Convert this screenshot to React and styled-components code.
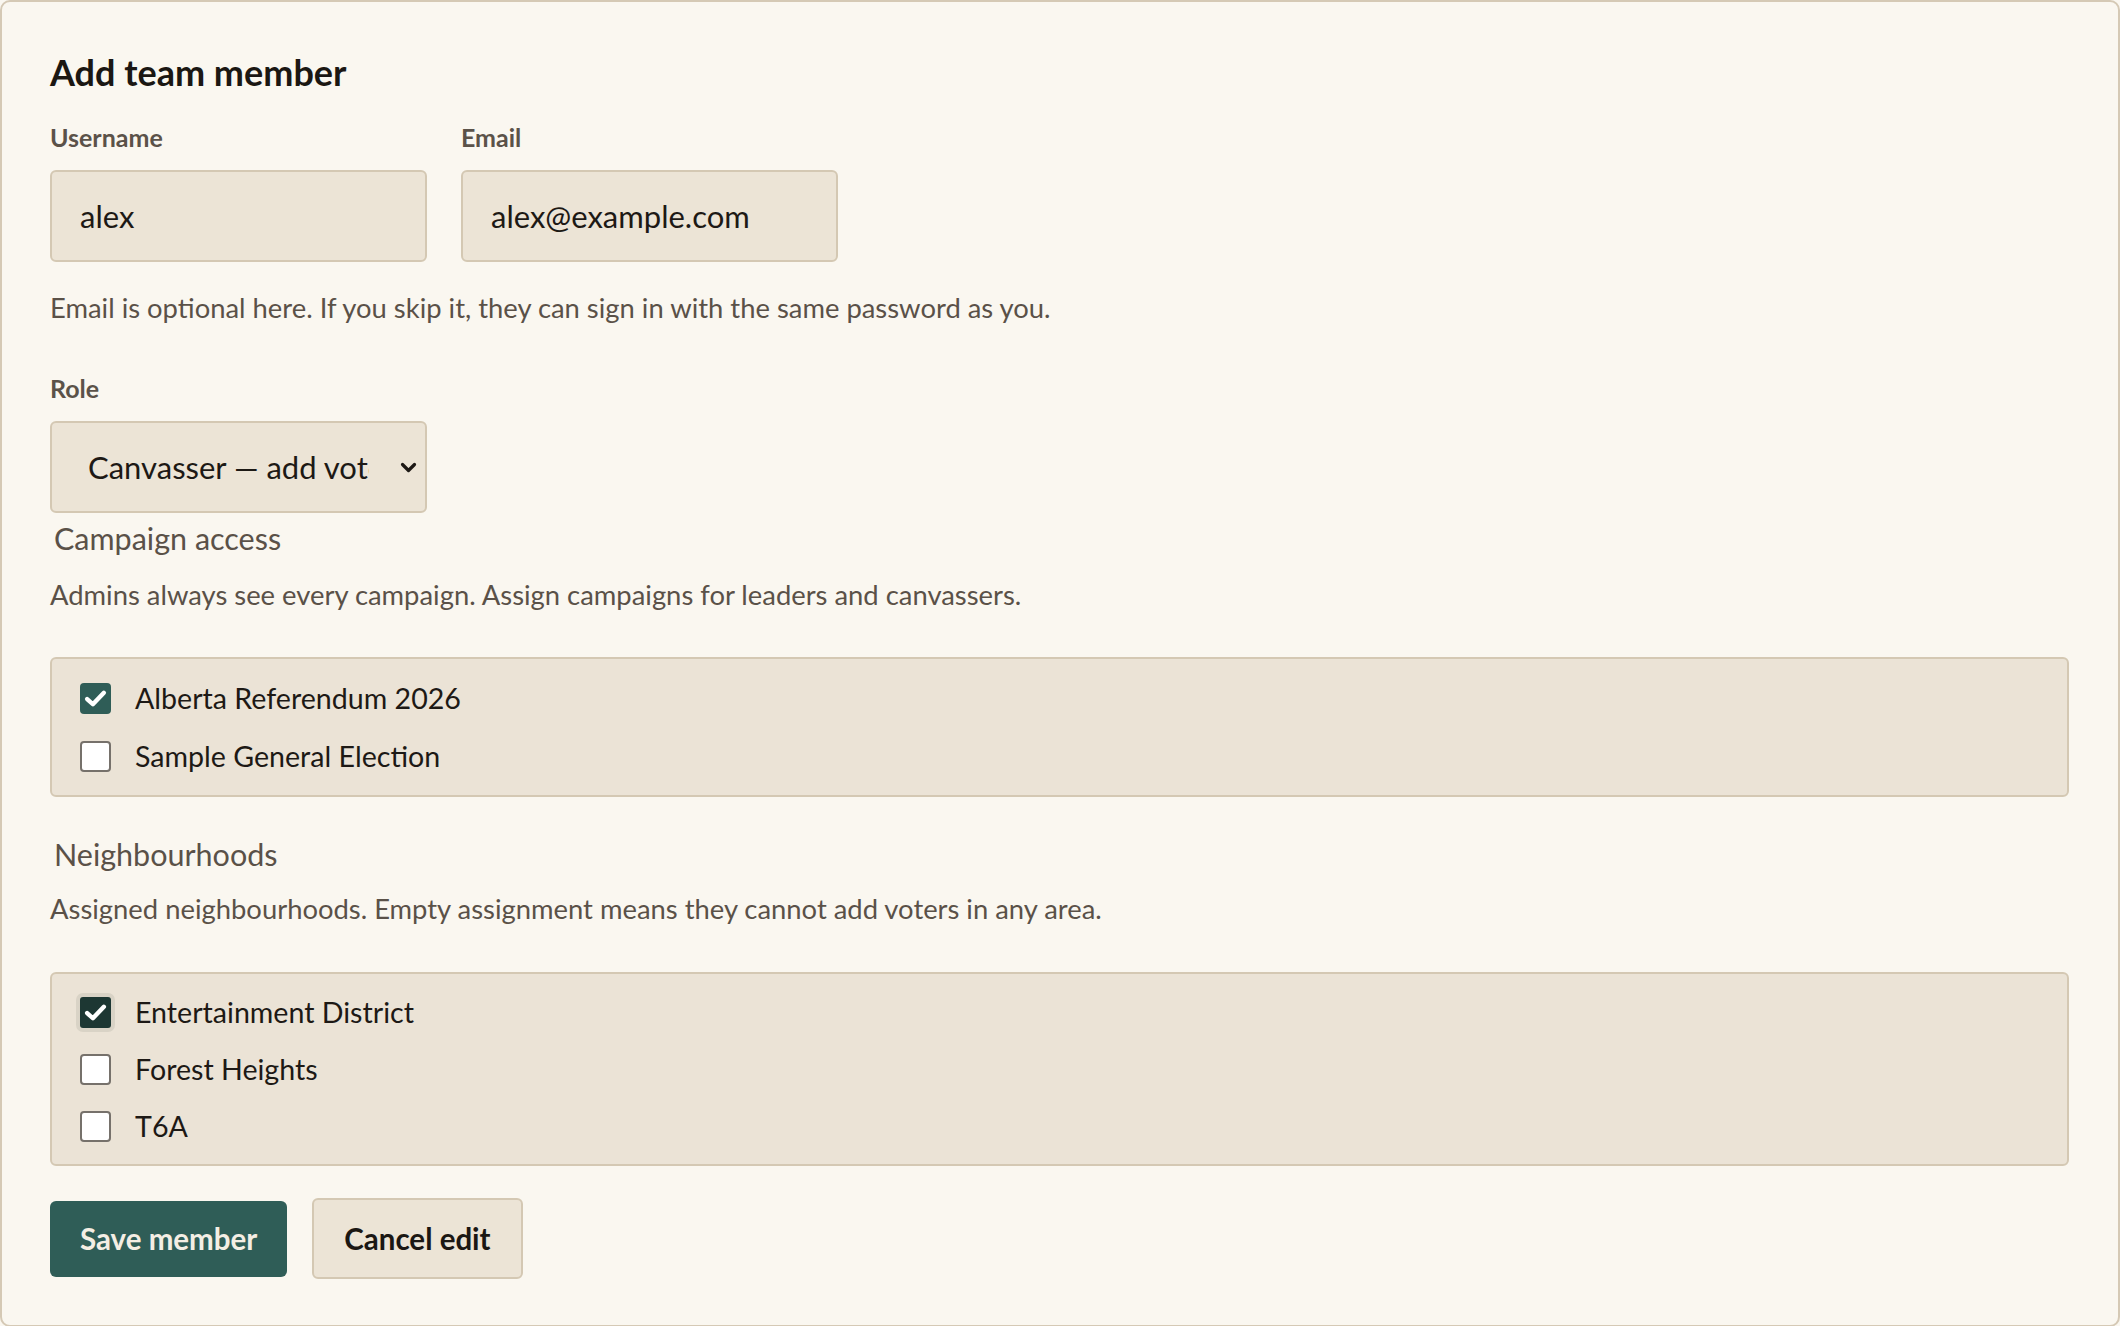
import React, { useState } from "react";
import styled, { createGlobalStyle } from "styled-components";

const GlobalStyle = createGlobalStyle`
  html, body {
    margin: 0;
    padding: 0;
    background: #faf7f0;
  }
  body {
    font-family: Lato, "Liberation Sans", sans-serif;
    color: #1d1915;
  }
  * {
    box-sizing: border-box;
  }
`;

const Card = styled.form`
  width: 2120px;
  min-height: 1326px;
  background: #faf7f0;
  border: 2px solid #d5c9b5;
  border-radius: 10px;
  padding: 50px 49px 46px 48px;
`;

const Title = styled.h2`
  margin: 0;
  font-size: 36px;
  line-height: 40px;
  font-weight: 700;
  color: #1b1713;
`;

const FieldRow = styled.div`
  display: flex;
  gap: 34px;
  margin-top: 30px;
`;

const Field = styled.label`
  display: flex;
  flex-direction: column;
  width: 377px;
  margin-top: ${(p) => p.$top || 0}px;
`;

const Label = styled.span`
  font-size: 25px;
  line-height: 30px;
  font-weight: 700;
  color: #5b5249;
  margin-bottom: 18px;
`;

const TextInput = styled.input`
  width: 100%;
  height: 92px;
  padding: 0 28px;
  font-family: inherit;
  font-size: 31px;
  color: #1d1915;
  background: #ece4d6;
  border: 2px solid #d4c8b3;
  border-radius: 6px;
  outline: none;
`;

const Help = styled.p`
  margin: ${(p) => p.$top || 0}px 0 0;
  font-size: 27.4px;
  line-height: 32px;
  color: #5a5148;
`;

const SelectWrap = styled.div`
  position: relative;
  width: 377px;
  height: 92px;
`;

const Select = styled.select`
  appearance: none;
  width: 100%;
  height: 100%;
  padding: 0 56px 0 36px;
  font-family: inherit;
  font-size: 31px;
  color: #1d1915;
  background: #ece4d6;
  border: 2px solid #d4c8b3;
  border-radius: 6px;
  outline: none;
`;

const Chevron = styled.svg`
  position: absolute;
  right: 10px;
  top: 50%;
  width: 17px;
  height: 11px;
  margin-top: -5px;
  pointer-events: none;
`;

const Group = styled.fieldset`
  margin: ${(p) => p.$top || 0}px 0 0;
  padding: 0;
  border: none;
  min-width: 0;
`;

const Legend = styled.legend`
  padding: 0 4px;
  font-size: 30.5px;
  line-height: 34px;
  color: #5a5148;
`;

const OptionBox = styled.div`
  display: flex;
  flex-direction: column;
  gap: ${(p) => p.$gap}px;
  margin-top: ${(p) => p.$top}px;
  padding: ${(p) => p.$pad}px 28px;
  background: #ebe3d6;
  border: 2px solid #d4c8b3;
  border-radius: 6px;
`;

const OptionRow = styled.label`
  display: flex;
  align-items: center;
  gap: 24px;
  height: 36px;
  font-size: 28.6px;
  color: #1d1915;
  cursor: pointer;
`;

const Box = styled.span`
  display: flex;
  align-items: center;
  justify-content: center;
  width: 31px;
  height: 31px;
  flex: none;
  background: ${(p) => (p.$checked ? (p.$hover ? "#1d3733" : "#2f5d57") : "#ffffff")};
  border: ${(p) => (p.$checked ? "none" : "2px solid #76716b")};
  box-shadow: ${(p) => (p.$hover ? "0 0 0 4px #d9d3c6" : "none")};
  border-radius: ${(p) => (p.$hover ? "3px" : "4px")};
`;

const Actions = styled.div`
  display: flex;
  align-items: center;
  gap: 25px;
  margin-top: 32px;
`;

const Button = styled.button`
  height: ${(p) => (p.$primary ? 76 : 81)}px;
  padding: 0 30px;
  font-family: inherit;
  font-size: 29.5px;
  font-weight: 700;
  border-radius: 6px;
  cursor: pointer;
  color: ${(p) => (p.$primary ? "#f4eee4" : "#1b1713")};
  background: ${(p) => (p.$primary ? "#2f5d57" : "#ece4d6")};
  border: ${(p) => (p.$primary ? "none" : "2px solid #d4c8b3")};
`;

const Check = () => (
  <svg width="23" height="19" viewBox="0 0 22 18">
    <path d="M3 9.5 L8.5 14.5 L19 3.5" fill="none" stroke="#fff" strokeWidth="4.2" strokeLinecap="round" strokeLinejoin="round" />
  </svg>
);

const CheckOption = ({ label, checked, hover, onToggle }) => (
  <OptionRow onClick={onToggle}>
    <Box $checked={checked} $hover={hover}>{checked && <Check />}</Box>
    {label}
  </OptionRow>
);

const campaigns = ["Alberta Referendum 2026", "Sample General Election"];
const neighbourhoods = ["Entertainment District", "Forest Heights", "T6A"];

export default function App() {
  const [camp, setCamp] = useState({ "Alberta Referendum 2026": true });
  const [hoods, setHoods] = useState({ "Entertainment District": true });

  return (
    <>
      <GlobalStyle />
      <Card onSubmit={(e) => e.preventDefault()}>
        <Title>Add team member</Title>
        <FieldRow>
          <Field>
            <Label>Username</Label>
            <TextInput defaultValue="alex" />
          </Field>
          <Field>
            <Label>Email</Label>
            <TextInput defaultValue="alex@example.com" />
          </Field>
        </FieldRow>
        <Help $top={30}>Email is optional here. If you skip it, they can sign in with the same password as you.</Help>

        <Field $top={49}>
          <Label>Role</Label>
          <SelectWrap>
            <Select defaultValue="canvasser">
              <option value="canvasser">Canvasser — add voters in assigned areas</option>
              <option value="leader">Leader — manage canvassers</option>
              <option value="admin">Admin — full access</option>
            </Select>
            <Chevron viewBox="0 0 17 11">
              <path d="M2.5 2.5 L8.5 8.5 L14.5 2.5" fill="none" stroke="#1d1915" strokeWidth="3.2" strokeLinecap="round" strokeLinejoin="round" />
            </Chevron>
          </SelectWrap>
        </Field>

        <Group $top={8}>
          <Legend>Campaign access</Legend>
          <Help $top={24}>Admins always see every campaign. Assign campaigns for leaders and canvassers.</Help>
          <OptionBox $top={46} $gap={22} $pad={21}>
            {campaigns.map((c) => (
              <CheckOption key={c} label={c} checked={!!camp[c]} onToggle={() => setCamp({ ...camp, [c]: !camp[c] })} />
            ))}
          </OptionBox>
        </Group>

        <Group $top={40}>
          <Legend>Neighbourhoods</Legend>
          <Help $top={22}>Assigned neighbourhoods. Empty assignment means they cannot add voters in any area.</Help>
          <OptionBox $top={47} $gap={21} $pad={20}>
            {neighbourhoods.map((n, i) => (
              <CheckOption key={n} label={n} checked={!!hoods[n]} hover={i === 0} onToggle={() => setHoods({ ...hoods, [n]: !hoods[n] })} />
            ))}
          </OptionBox>
        </Group>

        <Actions>
          <Button type="submit" $primary>Save member</Button>
          <Button type="button">Cancel edit</Button>
        </Actions>
      </Card>
    </>
  );
}
